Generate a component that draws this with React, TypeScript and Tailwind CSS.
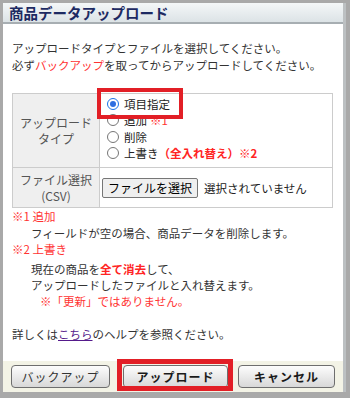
import React from 'react';

const Radio = ({ checked }: { checked?: boolean }) =>
  checked ? (
    <span className="inline-flex w-[12px] h-[12px] rounded-full border-[1.5px] border-[#1a73e8] bg-white items-center justify-center mr-[5px] shrink-0">
      <span className="w-[6px] h-[6px] rounded-full bg-[#2f6fe0]" />
    </span>
  ) : (
    <span className="inline-block w-[12px] h-[12px] rounded-full border border-[#767676] bg-white mr-[5px] shrink-0" />
  );

const Button = ({ label, weak }: { label: string; weak?: boolean }) => (
  <span
    className={`flex items-center justify-center h-[23px] rounded-[4px] border border-[#6e6e6e] bg-gradient-to-b from-[#fdfdfd] to-[#d8d8d8] text-[12px] ${
      weak ? 'font-normal text-[#333] tracking-[1px]' : 'font-bold text-[#1a1a1a] tracking-[1px]'
    }`}
  >
    {label}
  </span>
);

export default function App() {
  return (
    <div className="w-[350px] h-[398px] bg-[#a9a9a9] pt-[3px] pl-[3px] font-['Noto_Sans_CJK_JP',sans-serif] text-[11.5px] leading-[16px] text-[#333]">
      <div className="flex h-[389px]">
        <div className="w-[340px] bg-white flex flex-col">
          <div className="h-[21px] bg-gradient-to-b from-[#f4f7f8] to-[#dce3e6] border-b-2 border-[#a7aeb2] pl-[6px] text-[14.5px] leading-[19px] font-bold text-[#1d2a62]">
            商品データアップロード
          </div>

          <div className="flex-1 pt-[16px] pl-[9px] pr-[10px]">
            <p className="leading-[17px]">
              アップロードタイプとファイルを選択してください。
              <br />
              必ず<span className="text-[#ff3333]">バックアップ</span>を取ってからアップロードしてください。
            </p>

            <table className="mt-[19px] w-[321px] border-collapse">
              <tbody>
                <tr>
                  <td className="w-[87px] h-[74px] border border-[#cccccc] bg-[#efefef] text-center text-[#555] text-[12px] align-middle">
                    アップロード
                    <br />
                    タイプ
                  </td>
                  <td className="border border-[#cccccc] pl-[7px] pt-[2px] align-top">
                    <div className="relative flex items-center h-[16px] text-[#222]">
                      <Radio checked />
                      項目指定
                      <div className="absolute left-[-10px] top-[-8px] w-[86px] h-[31px] border-[4px] border-[#e21f26]" />
                    </div>
                    <div className="flex items-center h-[16.5px] text-[#222]">
                      <Radio />
                      追加<span className="text-[#ff3333] ml-[3px]">※1</span>
                    </div>
                    <div className="flex items-center h-[16.5px] text-[#222]">
                      <Radio />
                      削除
                    </div>
                    <div className="flex items-center h-[16.5px] text-[#222]">
                      <Radio />
                      上書き
                      <span className="text-[#ff2424] font-bold">（全入れ替え）※2</span>
                    </div>
                  </td>
                </tr>
                <tr>
                  <td className="h-[40px] border border-[#cccccc] bg-[#efefef] text-center text-[#555] text-[12px] align-middle">
                    ファイル選択
                    <br />
                    (CSV)
                  </td>
                  <td className="border border-[#cccccc] pl-[2px] align-middle">
                    <div className="flex items-center text-[#222]">
                      <span className="h-[20px] px-[5px] flex items-center border border-[#767676] rounded-[2px] bg-[#efefef] text-[12px] text-black">
                        ファイルを選択
                      </span>
                      <span className="ml-[6px]">選択されていません</span>
                    </div>
                  </td>
                </tr>
              </tbody>
            </table>

            <div className="text-[#ff3333]">※1 追加</div>
            <div className="pl-[19px] mt-[1px]">フィールドが空の場合、商品データを削除します。</div>
            <div className="text-[#ff3333]">※2 上書き</div>
            <div className="pl-[19px] mt-[4px]">
              現在の商品を<span className="text-[#ff2424] font-bold">全て消去</span>して、
              <br />
              アップロードしたファイルと入れ替えます。
            </div>
            <div className="pl-[28px] text-[#ff3333]">※「更新」ではありません。</div>

            <p className="mt-[17px]">
              詳しくは
              <a href="#" className="text-[#551a8b] underline">
                こちら
              </a>
              のヘルプを参照ください。
            </p>
          </div>

          <div className="h-[31px] bg-[#f3f3e6] flex items-start pt-[4px] pl-[8px]">
            <div className="w-[99px]">
              <Button label="バックアップ" weak />
            </div>
            <div className="relative w-[105px] ml-[13px]">
              <Button label="アップロード" />
              <div className="absolute left-[-6px] right-[-5px] top-[-6px] bottom-[-3px] border-[5px] border-[#e21f26]" />
            </div>
            <div className="w-[97px] ml-[10px]">
              <Button label="キャンセル" />
            </div>
          </div>
        </div>
        <div className="w-[3px] bg-[#bcc0c2]" />
      </div>
    </div>
  );
}
